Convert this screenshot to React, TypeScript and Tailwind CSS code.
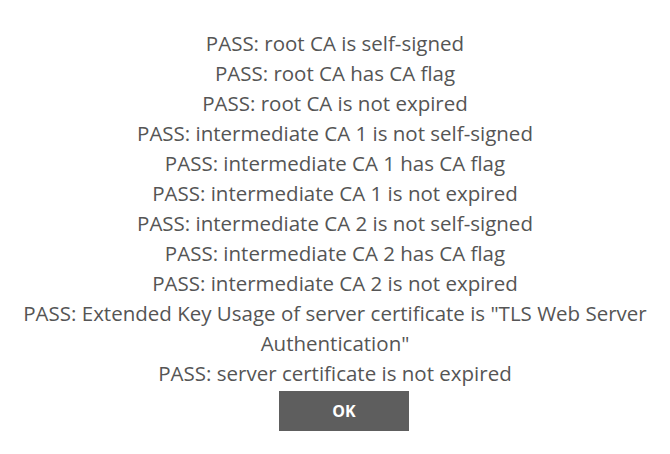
import React from 'react';

const results = [
  'PASS: root CA is self-signed',
  'PASS: root CA has CA flag',
  'PASS: root CA is not expired',
  'PASS: intermediate CA 1 is not self-signed',
  'PASS: intermediate CA 1 has CA flag',
  'PASS: intermediate CA 1 is not expired',
  'PASS: intermediate CA 2 is not self-signed',
  'PASS: intermediate CA 2 has CA flag',
  'PASS: intermediate CA 2 is not expired',
  'PASS: Extended Key Usage of server certificate is "TLS Web Server Authentication"',
  'PASS: server certificate is not expired',
];

const App: React.FC = () => {
  return (
    <div className="w-[670px] h-[454px] bg-white flex flex-col items-center pt-[28px] font-['Open_Sans',sans-serif]">
      <div className="w-[650px] text-center text-[20.5px] leading-[30px] text-[#555555]">
        {results.map((line, idx) => (
          <div key={idx}>{line}</div>
        ))}
      </div>
      <button className="mt-[3px] ml-[18px] w-[130px] h-[40px] bg-[#5e5e5e] text-white font-bold text-[16px]">
        OK
      </button>
    </div>
  );
};

export default App;
